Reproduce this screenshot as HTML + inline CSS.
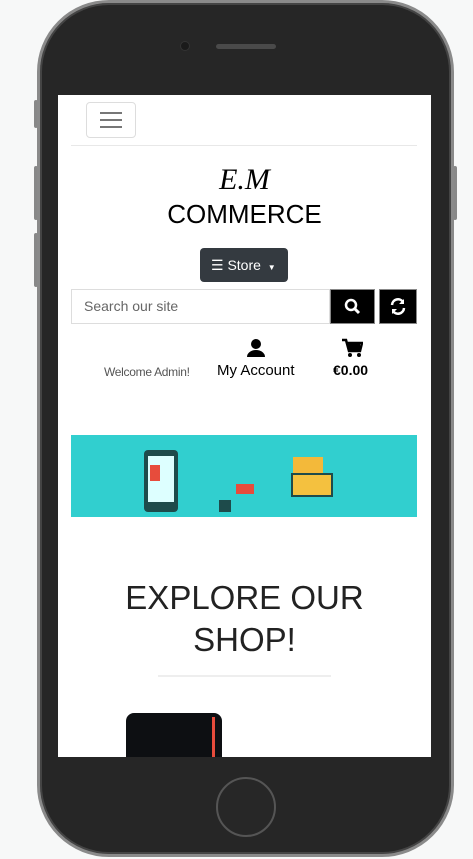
<!DOCTYPE html>
<html><head><style>
*{margin:0;padding:0;box-sizing:border-box}
body{width:473px;height:859px;background:#f7f8f8;position:relative;overflow:hidden;font-family:"Liberation Sans",sans-serif}
.a{position:absolute}
.phone{left:37px;top:0;width:417px;height:857px;border-radius:72px;background:#262626;border:3px solid #8a8a8a;box-shadow:inset 0 0 0 2px #444}
.btn{background:#888;width:4px}
.screen{left:58px;top:95px;width:373px;height:662px;background:#fff;overflow:hidden}
.t{white-space:nowrap}
</style></head><body>
<div class="a btn" style="left:34px;top:100px;height:28px;border-radius:2px"></div>
<div class="a btn" style="left:34px;top:166px;height:54px;border-radius:2px"></div>
<div class="a btn" style="left:34px;top:233px;height:54px;border-radius:2px"></div>
<div class="a btn" style="left:453px;top:166px;height:54px;border-radius:2px"></div>
<div class="a phone"></div>
<div class="a" style="left:180px;top:41px;width:10px;height:10px;border-radius:50%;background:#1a1a1a;border:1px solid #333"></div>
<div class="a" style="left:216px;top:44px;width:60px;height:5px;border-radius:3px;background:#4a4a4a"></div>
<div class="a" style="left:216px;top:777px;width:60px;height:60px;border-radius:50%;border:2px solid #555;background:#272727"></div>
<div class="a screen">
  <div class="a" style="left:28px;top:7px;width:50px;height:36px;border:1px solid #ddd;border-radius:4px"></div>
  <div class="a" style="left:42px;top:17px;width:22px;height:2px;background:#777"></div>
  <div class="a" style="left:42px;top:24px;width:22px;height:2px;background:#777"></div>
  <div class="a" style="left:42px;top:31px;width:22px;height:2px;background:#777"></div>
  <div class="a" style="left:13px;top:50px;width:346px;height:1px;background:#e8e8e8"></div>
  <div class="a t" style="left:0;width:373px;top:68px;text-align:center;font:italic 30px 'Liberation Serif',serif;color:#000">E.M</div>
  <div class="a t" style="left:0;width:373px;top:104px;text-align:center;font-size:26px;color:#000">COMMERCE</div>
  <div class="a" style="left:142px;top:153px;width:88px;height:34px;background:#343a40;border-radius:4px;color:#fff;font-size:14px;line-height:34px;padding-left:11px">&#9776; Store <span style="font-size:8px;margin-left:3px">&#9660;</span></div>
  <div class="a" style="left:13px;top:194px;width:259px;height:35px;border:1px solid #ddd;color:#666;font-size:14px;line-height:33px;padding-left:12px">Search our site</div>
  <div class="a" style="left:272px;top:194px;width:45px;height:35px;background:#000;border:1px solid #888"><svg width="43" height="33" viewBox="0 0 43 33"><circle cx="20" cy="15" r="5" stroke="#fff" stroke-width="2.5" fill="none"/><path d="M24 19l4 4" stroke="#fff" stroke-width="3"/></svg></div>
  <div class="a" style="left:321px;top:194px;width:38px;height:35px;background:#000;border:1px solid #888"><svg width="36" height="33" viewBox="0 0 36 33"><path d="M12 15a6 6 0 0 1 11-3M24 18a6 6 0 0 1-11 3" stroke="#fff" stroke-width="2.5" fill="none"/><path d="M24 9v5h-5zM12 24v-5h5z" fill="#fff"/></svg></div>
  <div class="a t" style="left:46px;top:270px;font-size:12px;color:#555;letter-spacing:-0.3px">Welcome Admin!</div>
  <svg class="a" style="left:188px;top:243px" width="20" height="20" viewBox="0 0 20 20"><circle cx="10" cy="6" r="5" fill="#000"/><path d="M1 19a9 7 0 0 1 18 0z" fill="#000"/></svg>
  <div class="a t" style="left:159px;top:267px;font-size:15px;color:#000">My Account</div>
  <svg class="a" style="left:283px;top:243px" width="22" height="20" viewBox="0 0 22 20"><path d="M1 2h4l3 11h11l2-8H6" stroke="#000" stroke-width="2.5" fill="none"/><rect x="7" y="6" width="12" height="6" fill="#000"/><circle cx="9" cy="17" r="2" fill="#000"/><circle cx="18" cy="17" r="2" fill="#000"/></svg>
  <div class="a t" style="left:275px;top:267px;font-size:14px;font-weight:bold;color:#000">€0.00</div>
  <div class="a" style="left:13px;top:340px;width:346px;height:82px;background:#31cfcf">
    <div class="a" style="left:73px;top:15px;width:34px;height:62px;background:#1e4b4b;border-radius:4px"><div class="a" style="left:4px;top:6px;width:26px;height:46px;background:#dff"></div><div class="a" style="left:6px;top:15px;width:10px;height:16px;background:#e74c3c"></div></div>
    <div class="a" style="left:222px;top:22px;width:30px;height:16px;background:#f3b93a"></div>
    <div class="a" style="left:220px;top:38px;width:42px;height:24px;background:#f4c13f;border:2px solid #1e4b4b"></div>
    <div class="a" style="left:165px;top:49px;width:18px;height:10px;background:#e74c3c"></div>
    <div class="a" style="left:148px;top:65px;width:12px;height:12px;background:#1e4b4b"></div>
  </div>
  <div class="a t" style="left:0;width:373px;top:482px;text-align:center;font-size:33px;line-height:42px;color:#222">EXPLORE OUR<br>SHOP!</div>
  <div class="a" style="left:100px;top:580px;width:173px;height:2px;background:#eee"></div>
  <div class="a" style="left:68px;top:618px;width:96px;height:50px;background:#0d0f12;border-radius:8px 8px 0 0"></div>
  <div class="a" style="left:154px;top:622px;width:3px;height:45px;background:#e74c3c"></div>
</div>
</body></html>
